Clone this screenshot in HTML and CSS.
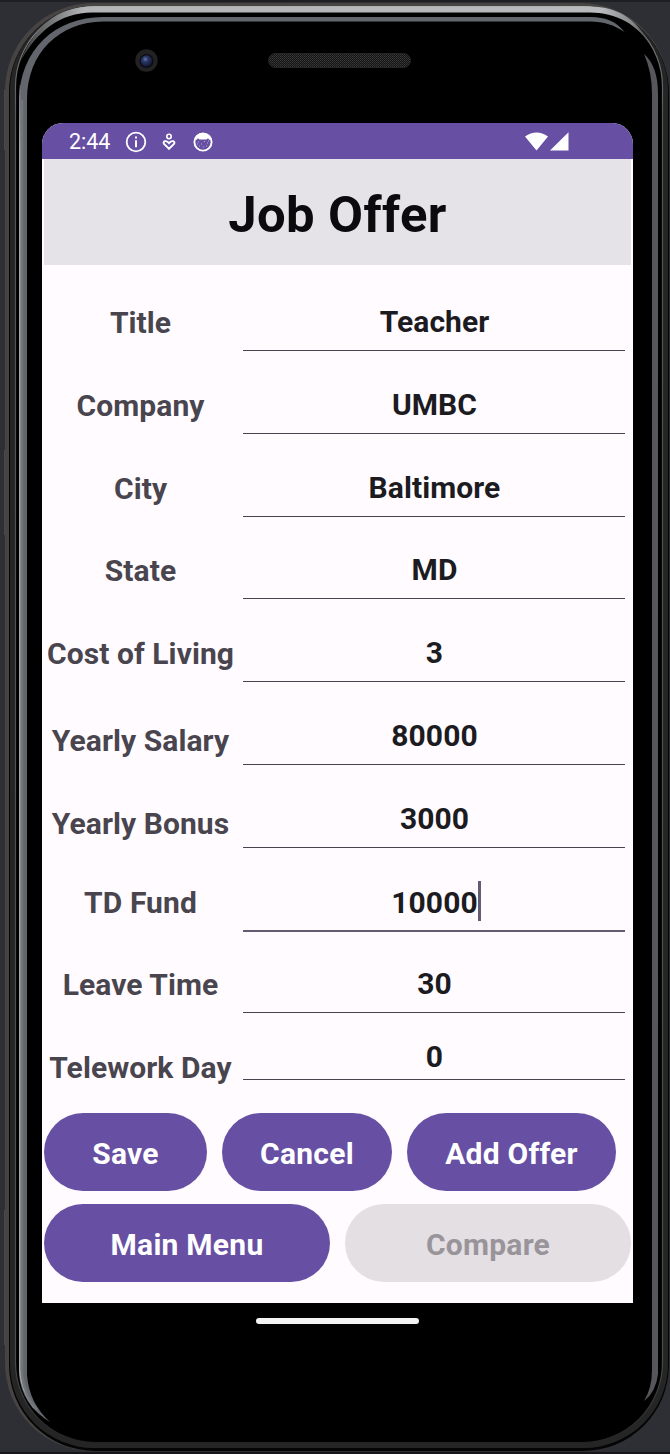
FILE: index.html
```html
<!DOCTYPE html>
<html lang="en">
<head>
<meta charset="utf-8">
<title>Job Offer</title>
<link rel="stylesheet" href="styles.css">
</head>
<body>
<div class="phone">
  <svg class="frame" viewBox="0 0 670 1454" aria-hidden="true">
    <defs>
      <linearGradient id="rim" x1="0" y1="0" x2="0" y2="1">
        <stop offset="0" stop-color="#a5a7a9"/>
        <stop offset=".035" stop-color="#6d6e70"/>
        <stop offset=".08" stop-color="#555555"/>
        <stop offset=".94" stop-color="#4c4c4c"/>
        <stop offset="1" stop-color="#242424"/>
      </linearGradient>
      <linearGradient id="shine" gradientUnits="userSpaceOnUse" x1="20" y1="0" x2="652" y2="0">
        <stop offset="0" stop-color="#3a3a3a"/>
        <stop offset=".045" stop-color="#707172"/>
        <stop offset=".1" stop-color="#b2b4b6"/>
        <stop offset=".92" stop-color="#b8babd"/>
        <stop offset=".97" stop-color="#85878a"/>
        <stop offset="1" stop-color="#303030"/>
      </linearGradient>
      <linearGradient id="bezel" gradientUnits="userSpaceOnUse" x1="0" y1="70" x2="0" y2="150">
        <stop offset="0" stop-color="#a9acae" stop-opacity="0"/>
        <stop offset="1" stop-color="#a9acae"/>
      </linearGradient>
      <radialGradient id="lens" cx=".4" cy=".35" r=".65">
        <stop offset="0" stop-color="#6878a8"/>
        <stop offset=".35" stop-color="#2a3869"/>
        <stop offset="1" stop-color="#11172e"/>
      </radialGradient>
      <pattern id="mesh" width="2" height="2" patternUnits="userSpaceOnUse">
        <rect width="2" height="2" fill="#151515"/>
        <rect width="1" height="1" fill="#383838"/>
        <rect x="1" y="1" width="1" height="1" fill="#303030"/>
      </pattern>
    </defs>
    <rect width="670" height="2" fill="#1d1f23"/>
    <rect y="1452" width="670" height="2" fill="#15151a"/>
    <path d="M4.500 90v60M4.500 450v85M4.500 1210v135" stroke="#48494d" fill="none"/>
    <rect x="5" y="3" width="664" height="1448" rx="88" fill="#474443"/>
    <rect x="9" y="6" width="660" height="1445" rx="86" fill="#050505"/>
    <rect x="10" y="6" width="658" height="1442" rx="84" fill="#252525"/>
    <rect x="15.500" y="6.500" width="647" height="1436" rx="80" fill="#000" stroke="url(#rim)" stroke-width="1.200"/>
    <path d="M20 62C34 28 56 6.500 92 6.500H590C620 7 638 20 652 48C638 24 616 12.500 590 12.500H92C60 13 38 30 20 62Z" fill="url(#shine)"/>
    <path d="M19 1375V100C20 50 55 17 103 17H590C606 17 617 22 624.500 32C614 25 604 21.500 590 21.500H103C60 22 27 52 27 100V1375Q29 1403 50 1422Q22 1405 19 1375Z" fill="#63676d"/>
    <path d="M19.800 85V1370Q21 1390 34 1408" fill="none" stroke="url(#bezel)" stroke-width="1.500"/>
    <path d="M22 100V1375Q25 1398 37 1410" fill="none" stroke="#71767c" stroke-width="2.500"/>
    <path d="M644 54Q658 66 658 94V1374Q656 1392 644 1401Q652 1388 652 1370V94Q652 72 644 54Z" fill="#56575b"/>
    <circle cx="146.500" cy="60.500" r="11.200" fill="#222222"/>
    <circle cx="146.500" cy="61" r="7" fill="#0a0c12"/>
    <circle cx="146.500" cy="61" r="5.800" fill="url(#lens)"/>
    <rect x="268.500" y="53.500" width="142" height="14" rx="7" fill="url(#mesh)" stroke="#242424"/>
  </svg>

  <main class="screen">
    <header class="status">
      <span class="clock">2:44</span>
      <svg class="info" viewBox="0 0 22 22"><circle cx="11" cy="11" r="9.300" fill="none" stroke="#fff" stroke-width="1.800"/><path d="M10 5.500h2v2h-2zM10 9.300h2v7h-2z" fill="#fff"/></svg>
      <svg class="heart" viewBox="0 0 14 18"><circle cx="7" cy="3.500" r="2.200" fill="none" stroke="#fff" stroke-width="1.600"/><path d="M7 15.800 2 10.900C.3 8.700 3.800 6.300 7 10.200 10.200 6.300 13.700 8.700 12 10.900Z" fill="none" stroke="#fff" stroke-width="1.900"/></svg>
      <svg class="cat" viewBox="0 0 20 20"><circle cx="10" cy="10" r="8.600" fill="none" stroke="#fff" stroke-width="1.900"/><path d="M1.500 7Q4 1 10 1T18.500 7L16.500 8 15 6.200 13.500 7.500H6.500L5 6.200 3.500 8Z" fill="#fff"/><path d="M5 10h1M8 12h1M11 9.500h1M14 11h1M6 14h1M10 15h1M13 14h1M15 9h1M4 12h1" stroke="#c9bce6" stroke-width=".8"/></svg>
      <span class="spacer"></span>
      <svg class="signals" viewBox="0 0 44 20"><path d="M0 4.500Q11.500-3.500 23 4.500L11.500 18.500ZM43.500.300V18.500H25Z" fill="#fff"/></svg>
    </header>
    <h1 class="heading">Job Offer</h1>
    <form class="offer">
      <div class="row"><label class="label">Title</label><div class="field">Teacher</div></div>
      <div class="row"><label class="label">Company</label><div class="field">UMBC</div></div>
      <div class="row"><label class="label">City</label><div class="field">Baltimore</div></div>
      <div class="row"><label class="label">State</label><div class="field">MD</div></div>
      <div class="row"><label class="label">Cost of Living</label><div class="field">3</div></div>
      <div class="row row-low"><label class="label">Yearly Salary</label><div class="field">80000</div></div>
      <div class="row row-low"><label class="label">Yearly Bonus</label><div class="field">3000</div></div>
      <div class="row"><label class="label">TD Fund</label><div class="field focused">10000<span class="caret"></span></div></div>
      <div class="row"><label class="label">Leave Time</label><div class="field">30</div></div>
      <div class="row row-last"><label class="label">Telework Day</label><div class="field">0</div></div>
    </form>
    <div class="actions">
      <button class="button save">Save</button>
      <button class="button cancel">Cancel</button>
      <button class="button add">Add Offer</button>
    </div>
    <div class="actions actions-nav">
      <button class="button wide">Main Menu</button>
      <button class="button wide disabled" disabled>Compare</button>
    </div>
  </main>
  <div class="home"></div>
</div>
</body>
</html>
```
FILE: styles.css
```css
* { box-sizing: border-box; }

body {
  margin: 0;
  background: #2d2f34;
  font-family: Roboto, "Liberation Sans", sans-serif;
}

.phone {
  position: relative;
  width: 670px;
  height: 1454px;
  padding: 123px 37px 0 42px;
  overflow: hidden;
}

.frame {
  position: absolute;
  inset: 0;
  width: 670px;
  height: 1454px;
}

.screen {
  position: relative;
  width: 591px;
  height: 1180px;
  overflow: hidden;
  border-radius: 21px 21px 0 0;
  background: #fffbff;
}

.status {
  display: flex;
  align-items: center;
  height: 36px;
  padding: 1px 64px 0 27px;
  background: #6750a3;
  color: #fff;
}

.clock { width: 56px; font-size: 21.500px; line-height: 36px; }
.info { width: 22px; height: 22px; }
.heart { width: 14px; height: 18px; margin-left: 15px; }
.cat { width: 20px; height: 20px; margin-left: 16.500px; }
.spacer { flex: 1; }
.signals { width: 44px; height: 20px; }

.heading {
  height: 106px;
  margin: 0 2px;
  background: #e5e3e8;
  color: #0b0a0d;
  text-align: center;
  font-size: 50.800px;
  font-weight: 700;
  letter-spacing: .4px;
  line-height: 111px;
}

.offer { padding-top: 3.400px; }

.row {
  display: grid;
  grid-template-columns: 197px 382px;
  column-gap: 4px;
  align-items: end;
  height: 82.780px;
  font-size: 30px;
  font-weight: 700;
  letter-spacing: .08px;
  line-height: 36px;
  text-align: center;
}

.label { padding-bottom: 10px; color: #49454e; white-space: nowrap; }
.row-low .label { padding-bottom: 6px; }

.field {
  padding-bottom: 10px;
  padding-left: 1px;
  border-bottom: 1.500px solid #49454e;
  color: #1c1b1f;
}

.focused {
  margin-bottom: -1px;
  padding-bottom: 9px;
  border-bottom: 2px solid #625b71;
}

.caret {
  display: inline-block;
  width: 3px;
  height: 40px;
  margin: -14px -3px -6px 0;
  background: #625b71;
  vertical-align: middle;
}

.row-last { height: 67px; }
.row-last .label { padding-bottom: 0; margin-bottom: -6px; }
.row-last .field { padding-bottom: 4px; }

.actions {
  display: flex;
  gap: 15px;
  margin: 33.100px 2px 0;
}

.actions-nav { margin-top: 13px; }

.button {
  height: 78px;
  padding: 3px 0 0;
  border: 0;
  border-radius: 39px;
  background: #6750a3;
  color: #fff;
  font: 700 30px/36px Roboto, "Liberation Sans", sans-serif;
  letter-spacing: .25px;
}

.save { width: 163px; }
.cancel { width: 170px; }
.add { width: 209px; }
.wide { width: 286px; }
.disabled { background: #e3dfe3; color: #99949a; }

.home {
  position: relative;
  width: 163px;
  height: 6px;
  margin: 15px 0 0 214px;
  border-radius: 3px;
  background: #f4f4f4;
}
```
